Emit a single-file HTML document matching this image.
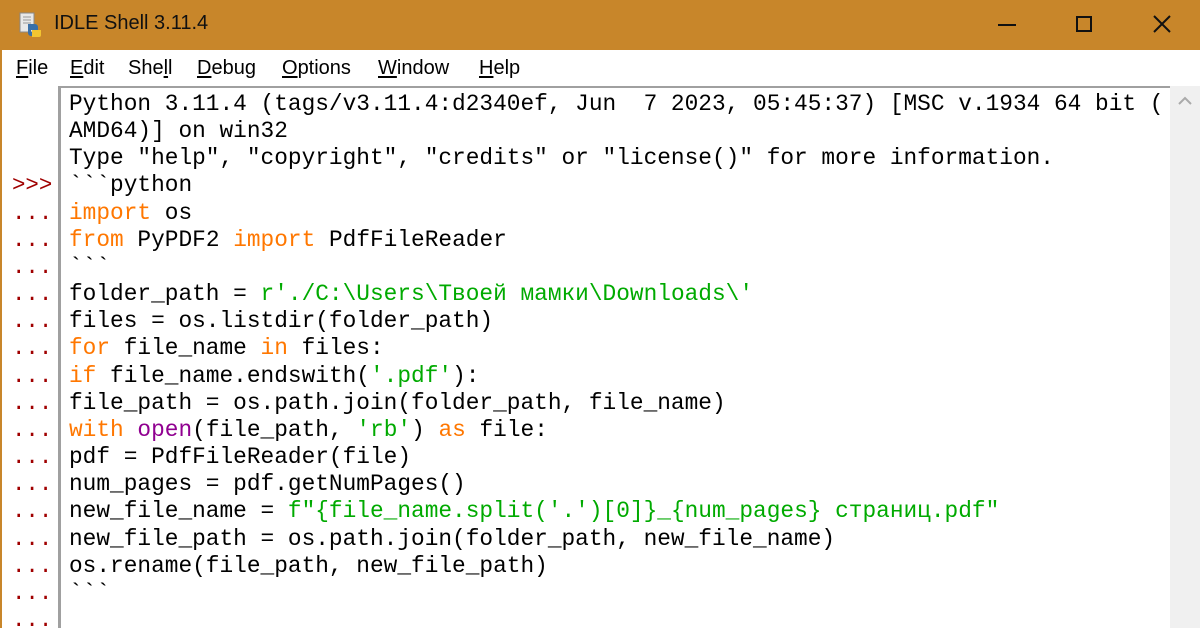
<!DOCTYPE html>
<html><head><meta charset="utf-8"><style>
*{margin:0;padding:0;box-sizing:border-box}
body{width:1200px;height:628px;overflow:hidden;background:#fff;position:relative;font-family:"Liberation Sans",sans-serif}
#title{position:absolute;left:0;top:0;width:1200px;height:50px;background:#c8862a}
#title .t{position:absolute;left:54px;top:12px;font-size:20px;color:#111}
#menu{position:absolute;left:2px;top:50px;width:1198px;height:36px;background:#fff}
#menu span{position:absolute;top:7px;font-size:20px;color:#000}
#menu u{text-decoration:underline;text-underline-offset:2px}
#lb{position:absolute;left:0;top:50px;width:2px;height:578px;background:#c8862a}
#txt{position:absolute;left:58px;top:86px;width:1112px;height:542px;border-left:3px solid #a0a0a0;border-top:2px solid #a0a0a0}
#sb{position:absolute;left:1170px;top:86px;width:30px;height:542px;background:#f0f0f0}
.c{font-family:"Liberation Mono",monospace;font-size:22.8px;line-height:27.17px;height:27.17px;white-space:pre;color:#000}
#code{position:absolute;left:69px;top:91px}
#gut{position:absolute;left:12px;top:91px;color:#a00000}
#gut div{color:#a00000;font-family:"Liberation Mono",monospace;font-size:22.4px;line-height:27.17px;height:27.17px;white-space:pre}
.k{color:#ff7700}.s{color:#00aa00}.b{color:#900090}
</style></head><body>
<div id="title">
<svg style="position:absolute;left:18px;top:12px" width="26" height="26" viewBox="0 0 26 26"><rect x="2" y="1" width="14" height="19" fill="#e8e8e8" stroke="#888"/><path d="M5 5h8M5 8h8M5 11h8" stroke="#999"/><path d="M10 12h7a3 3 0 0 1 3 3v3h-7v2h9a3 3 0 0 1-3 4h-6a3 3 0 0 1-3-3z" fill="#3a70a8"/><path d="M14 18h9v5a2 2 0 0 1-2 2h-7z" fill="#f2c531"/></svg>
<div class="t">IDLE Shell 3.11.4</div>
<div style="position:absolute;left:998px;top:24px;width:18px;height:2px;background:#111"></div>
<div style="position:absolute;left:1076px;top:16px;width:16px;height:16px;border:2px solid #111"></div>
<svg style="position:absolute;left:1152px;top:14px" width="20" height="20"><path d="M2 2L18 18M18 2L2 18" stroke="#111" stroke-width="2"/></svg>
</div>
<div id="lb"></div>
<div id="menu">
<span style="left:14px"><u>F</u>ile</span>
<span style="left:68px"><u>E</u>dit</span>
<span style="left:126px">She<u>l</u>l</span>
<span style="left:195px"><u>D</u>ebug</span>
<span style="left:280px"><u>O</u>ptions</span>
<span style="left:376px"><u>W</u>indow</span>
<span style="left:477px"><u>H</u>elp</span>
</div>
<div id="txt"></div>
<div id="sb"><svg style="position:absolute;left:7px;top:10px" width="16" height="10"><path d="M2 8L8 2L14 8" stroke="#aaa" stroke-width="2" fill="none"/></svg></div>
<div id="gut">
<div> </div><div> </div><div> </div>
<div>&gt;&gt;&gt;</div>
<div>...</div><div>...</div><div>...</div><div>...</div><div>...</div><div>...</div><div>...</div><div>...</div><div>...</div><div>...</div><div>...</div><div>...</div><div>...</div><div>...</div><div>...</div><div>...</div>
</div>
<div id="code">
<div class="c">Python 3.11.4 (tags/v3.11.4:d2340ef, Jun  7 2023, 05:45:37) [MSC v.1934 64 bit (</div>
<div class="c">AMD64)] on win32</div>
<div class="c">Type "help", "copyright", "credits" or "license()" for more information.</div>
<div class="c">&#96;&#96;&#96;python</div>
<div class="c"><span class="k">import</span> os</div>
<div class="c"><span class="k">from</span> PyPDF2 <span class="k">import</span> PdfFileReader</div>
<div class="c">&#96;&#96;&#96;</div>
<div class="c">folder_path = <span class="s">r'./C:\Users\Твоей мамки\Downloads\'</span></div>
<div class="c">files = os.listdir(folder_path)</div>
<div class="c"><span class="k">for</span> file_name <span class="k">in</span> files:</div>
<div class="c"><span class="k">if</span> file_name.endswith(<span class="s">'.pdf'</span>):</div>
<div class="c">file_path = os.path.join(folder_path, file_name)</div>
<div class="c"><span class="k">with</span> <span class="b">open</span>(file_path, <span class="s">'rb'</span>) <span class="k">as</span> file:</div>
<div class="c">pdf = PdfFileReader(file)</div>
<div class="c">num_pages = pdf.getNumPages()</div>
<div class="c">new_file_name = <span class="s">f"{file_name.split('.')[0]}_{num_pages} страниц.pdf"</span></div>
<div class="c">new_file_path = os.path.join(folder_path, new_file_name)</div>
<div class="c">os.rename(file_path, new_file_path)</div>
<div class="c">&#96;&#96;&#96;</div>
</div>
</body></html>
